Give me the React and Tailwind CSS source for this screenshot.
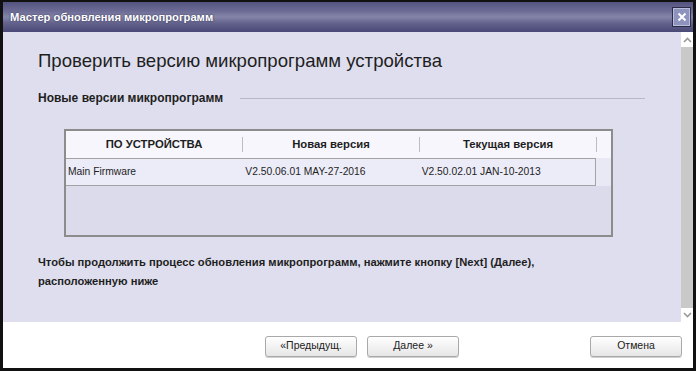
import React from 'react';

const cols = [
  { title: 'ПО УСТРОЙСТВА', value: 'Main Firmware' },
  { title: 'Новая версия', value: 'V2.50.06.01 MAY-27-2016' },
  { title: 'Текущая версия', value: 'V2.50.02.01 JAN-10-2013' },
];

const Button = ({ children, className = '' }) => (
  <button
    className={`h-[21px] w-[92px] rounded-[3px] border border-[#a9a9a9] bg-gradient-to-b from-white to-[#e6e6e6] text-[10.5px] text-[#222] shadow-[0_1px_0_#d0d0d0] ${className}`}
  >
    {children}
  </button>
);

const Chevron = ({ down }) => (
  <svg width="9" height="6" viewBox="0 0 9 6" className={down ? 'rotate-180' : ''}>
    <path d="M1 5 L4.5 1.5 L8 5" fill="none" stroke="#9a9a9a" strokeWidth="1.6" />
  </svg>
);

export default function App() {
  return (
    <div
      className="w-[696px] h-[371px] bg-[#111] pt-[2px] pl-[3px] pr-[3px] pb-[3px] flex flex-col"
      style={{ fontFamily: '"Liberation Sans", Arial, sans-serif' }}
    >
      {/* title bar */}
      <div className="h-[30px] shrink-0 flex items-center justify-between pl-[7px] pr-[2px] bg-[linear-gradient(to_bottom,#54537f_0%,#6c6b95_30%,#8584a8_50%,#64638d_70%,#4a4977_100%)]">
        <span className="text-[11.2px] font-bold text-white [text-shadow:0_0_2px_#2a2950]">
          Мастер обновления микропрограмм
        </span>
        <div className="w-[19px] h-[20px] border border-[#2c2c48] bg-[#8d93bd] shadow-[inset_0_0_0_1px_#b9bddb] flex items-center justify-center">
          <svg width="10" height="10" viewBox="0 0 10 10">
            <path d="M1.5 1.5 L8.5 8.5 M8.5 1.5 L1.5 8.5" stroke="white" strokeWidth="2" />
          </svg>
        </div>
      </div>

      {/* body */}
      <div className="h-[290px] shrink-0 flex">
        <div className="flex-1 bg-[#dfdeee] pl-[35px] pt-[17px]">
          <h1 className="text-[18.6px] leading-[24px] text-[#1e1e1e]">
            Проверить версию микропрограмм устройства
          </h1>
          <div className="mt-[17px] h-[16px] flex items-center pr-[36px]">
            <span className="text-[12px] font-bold text-[#1e1e1e]">Новые версии микропрограмм</span>
            <div className="ml-[17px] flex-1 h-px bg-[#b8b8c4]" />
          </div>

          {/* table */}
          <div className="mt-[23px] ml-[26px] w-[549px] h-[108px] border-2 border-[#8c8c8c] bg-[#dcdbeb] flex flex-col">
            <div className="h-[27px] shrink-0 bg-[#f6f6fc] flex items-center">
              {cols.map((c) => (
                <div key={c.title} className="w-[177px] h-[15px] flex items-center justify-center border-r border-[#bdbdbd] text-[11.3px] font-bold text-[#1e1e1e]">
                  {c.title}
                </div>
              ))}
            </div>
            <div className="h-[28px] shrink-0 flex bg-[#e9e9f6]">
              <div className="w-[530px] flex border-r border-b border-t border-[#a3a3a3] bg-[#ececf8]">
                {cols.map((c, i) => (
                  <div key={c.value} className={`w-[177px] flex items-center text-[10.3px] text-[#1e1e1e] ${i === 0 ? 'pl-[2px]' : 'pl-[3px]'}`}>
                    {c.value}
                  </div>
                ))}
              </div>
            </div>
          </div>

          <p className="mt-[16px] text-[11.2px] leading-[19px] font-bold text-[#1e1e1e]">
            Чтобы продолжить процесс обновления микропрограмм, нажмите кнопку [Next] (Далее),
            <br />
            расположенную ниже
          </p>
        </div>

        {/* scrollbar */}
        <div className="w-[12px] flex flex-col bg-white">
          <div className="h-[15px] flex items-center justify-center">
            <Chevron />
          </div>
          <div className="flex-1 bg-[#c9c9c9]" />
          <div className="h-[14px] flex items-center justify-center">
            <Chevron down />
          </div>
        </div>
      </div>

      {/* footer */}
      <div className="flex-1 bg-white flex items-center pl-[262px] pr-[11px] pt-[2px]">
        <Button>«Предыдущ.</Button>
        <Button className="ml-[10px]">Далее »</Button>
        <Button className="ml-auto">Отмена</Button>
      </div>
    </div>
  );
}
